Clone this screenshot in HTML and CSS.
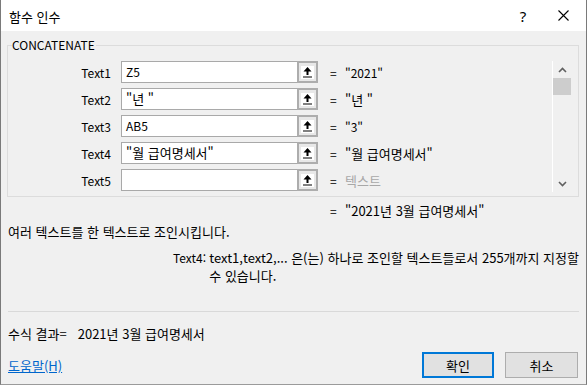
FILE: index.html
```html
<!DOCTYPE html>
<html lang="ko">
<head>
    <meta charset="UTF-8">
    <title>함수 인수</title>
    <link rel="stylesheet" href="styles.css">
</head>
<body>
<div class="dialog">
    <div class="titlebar">
        <span class="title">함수 인수</span>
        <span class="help">?</span>
        <span class="close">
            <svg width="11" height="11" viewBox="0 0 11 11"><path d="M0.5 0.5 L10.5 10.5 M10.5 0.5 L0.5 10.5" stroke="#000" stroke-width="1.1" fill="none"/></svg>
        </span>
    </div>

    <div class="body">
        <fieldset class="group">
            <legend>CONCATENATE</legend>
            <div class="group-inner">
                <div class="args">
                    <div class="arg">
                        <span class="arg-label">Text1</span>
                        <span class="field"><span class="field-input latin">Z5</span><span class="collapse"><svg width="9" height="11" viewBox="0 0 9 11"><path d="M4.5 0 L0.5 4.5 L3.5 4.5 L3.5 8 L5.5 8 L5.5 4.5 L8.5 4.5 Z M0 9.5 H9 V10.6 H0 Z" fill="#000"/></svg></span></span>
                        <span class="eq">=</span>
                        <span class="arg-value latin">"2021"</span>
                    </div>
                    <div class="arg">
                        <span class="arg-label">Text2</span>
                        <span class="field"><span class="field-input">"년 "</span><span class="collapse"><svg width="9" height="11" viewBox="0 0 9 11"><path d="M4.5 0 L0.5 4.5 L3.5 4.5 L3.5 8 L5.5 8 L5.5 4.5 L8.5 4.5 Z M0 9.5 H9 V10.6 H0 Z" fill="#000"/></svg></span></span>
                        <span class="eq">=</span>
                        <span class="arg-value">"년 "</span>
                    </div>
                    <div class="arg">
                        <span class="arg-label">Text3</span>
                        <span class="field"><span class="field-input latin">AB5</span><span class="collapse"><svg width="9" height="11" viewBox="0 0 9 11"><path d="M4.5 0 L0.5 4.5 L3.5 4.5 L3.5 8 L5.5 8 L5.5 4.5 L8.5 4.5 Z M0 9.5 H9 V10.6 H0 Z" fill="#000"/></svg></span></span>
                        <span class="eq">=</span>
                        <span class="arg-value latin">"3"</span>
                    </div>
                    <div class="arg">
                        <span class="arg-label">Text4</span>
                        <span class="field"><span class="field-input">"월 급여명세서"</span><span class="collapse"><svg width="9" height="11" viewBox="0 0 9 11"><path d="M4.5 0 L0.5 4.5 L3.5 4.5 L3.5 8 L5.5 8 L5.5 4.5 L8.5 4.5 Z M0 9.5 H9 V10.6 H0 Z" fill="#000"/></svg></span></span>
                        <span class="eq">=</span>
                        <span class="arg-value">"월 급여명세서"</span>
                    </div>
                    <div class="arg">
                        <span class="arg-label">Text5</span>
                        <span class="field"><span class="field-input"></span><span class="collapse"><svg width="9" height="11" viewBox="0 0 9 11"><path d="M4.5 0 L0.5 4.5 L3.5 4.5 L3.5 8 L5.5 8 L5.5 4.5 L8.5 4.5 Z M0 9.5 H9 V10.6 H0 Z" fill="#000"/></svg></span></span>
                        <span class="eq">=</span>
                        <span class="arg-value placeholder">텍스트</span>
                    </div>
                </div>

                <div class="scrollbar">
                    <span class="scroll-btn"><svg width="9" height="6" viewBox="0 0 9 6"><path d="M1 5 L4.5 1.5 L8 5" stroke="#606060" stroke-width="1.6" fill="none"/></svg></span>
                    <span class="scroll-thumb"></span>
                    <span class="scroll-track"></span>
                    <span class="scroll-btn"><svg width="9" height="6" viewBox="0 0 9 6"><path d="M1 1 L4.5 4.5 L8 1" stroke="#606060" stroke-width="1.6" fill="none"/></svg></span>
                </div>
            </div>
        </fieldset>

        <div class="result-line"><span class="eq">=</span>"2021년 3월 급여명세서"</div>
        <p class="summary">여러 텍스트를 한 텍스트로 조인시킵니다.</p>
        <div class="arg-help">
            <span class="arg-name latin">Text4:</span>
            <span class="arg-desc">text1,text2,... 은(는) 하나로 조인할 텍스트들로서 255개까지 지정할<br>수 있습니다.</span>
        </div>

        <div class="sep"></div>

        <div class="formula-result">수식 결과=<span class="formula-value">2021년 3월 급여명세서</span></div>

        <div class="footer">
            <a href="#" class="help-link">도움말(H)</a>
            <div class="buttons">
                <button class="btn btn-default">확인</button>
                <button class="btn">취소</button>
            </div>
        </div>
    </div>
</div>
</body>
</html>
```

FILE: styles.css
```css
/* 함수 인수 대화상자 */
body {
    margin: 0;
    background-color: #ffffff;
    font-family: "Noto Sans CJK KR", "Noto Sans", sans-serif;
    font-size: 13px;
    color: #000000;
}
/* 영문만 있는 텍스트는 조금 작게 */
.latin { font-size: 12px; }

.dialog {
    width: 587px;
    height: 385px;
    box-sizing: border-box;
    border-left: 1px solid #7a7a7a;
    border-right: 1px solid #7a7a7a;
    border-bottom: 1px solid #9a9a9a;
    background-color: #f0f0f0;
    display: flex;
    flex-direction: column;
}

/* 제목 표시줄 */
.titlebar { height: 31px; background-color: #ffffff; display: flex; align-items: center; padding-left: 8px; }
.title { flex: 1; padding-top: 1px; }
.help { width: 20px; margin-right: 25px; font-size: 15px; text-align: center; font-family: "Noto Sans", sans-serif; }
.close { display: flex; width: 11px; margin-right: 17px; }

.body { flex: 1; padding: 6px 7px 0 6px; display: flex; flex-direction: column; }

/* 인수 그룹 */
.group { margin: 0; padding: 0; border: 1px solid #dcdcdc; min-inline-size: 0; }
.group legend { margin-left: 4px; padding: 0 1px 0 0; line-height: 16px; font-size: 12px; }
.group-inner { display: flex; padding: 8px 7px 4px 0; }

.args { flex: 1; display: flex; flex-direction: column; gap: 5px; }
.arg { display: flex; align-items: center; height: 22px; }
.arg-label { width: 103px; text-align: right; font-size: 12px; }
.field { display: flex; margin-left: 10px; height: 22px; }
.field-input {
    width: 176px;
    box-sizing: border-box;
    border: 1px solid #a9a9a9;
    border-right: none;
    background-color: #ffffff;
    padding-left: 4px;
    line-height: 20px;
    white-space: nowrap;
}
.collapse {
    width: 21px;
    box-sizing: border-box;
    border: 2px solid #adadad;
    background-color: #e8e8e8;
    display: flex;
    align-items: center;
    justify-content: center;
}
.collapse svg { background-color: #ffffff; padding: 1px 2px; }
.eq { margin-left: 12px; width: 15px; font-size: 12px; }
.arg-value { white-space: nowrap; }
.placeholder { color: #a8a8a8; }

/* 스크롤바 */
.scrollbar { width: 18px; height: 131px; border-left: 1px solid #ffffff; display: flex; flex-direction: column; }
.scroll-btn { height: 17px; display: flex; align-items: center; justify-content: center; }
.scroll-thumb { height: 17px; background-color: #cdcdcd; }
.scroll-track { flex: 1; }

/* 설명 영역 */
.result-line { margin-top: 6px; padding-left: 323px; line-height: 16px; white-space: nowrap; }
.result-line .eq { margin-left: 0; display: inline-block; }
.summary { margin: 5px 0 0 1px; line-height: 16px; }
.arg-help { display: flex; margin-top: 9px; padding-left: 166px; line-height: 18px; }
.arg-name { width: 41px; }
.arg-desc { white-space: nowrap; }

.sep { height: 1px; background-color: #d9d9d9; margin: 26px 0 0 1px; }

.formula-result { margin-top: 14px; padding-left: 1px; line-height: 16px; }
.formula-value { margin-left: 11px; }

.footer { margin-top: 10px; display: flex; align-items: center; justify-content: space-between; padding-left: 1px; }
.help-link { color: #0066cc; text-decoration: underline; }
.buttons { display: flex; gap: 11px; margin-right: 1px; }
.btn {
    width: 73px;
    height: 26px;
    box-sizing: border-box;
    background-color: #e1e1e1;
    border: 1px solid #adadad;
    font-family: inherit;
    font-size: 13px;
    padding: 0;
}
.btn-default { width: 72px; border: 2px solid #0078d7; }
```
